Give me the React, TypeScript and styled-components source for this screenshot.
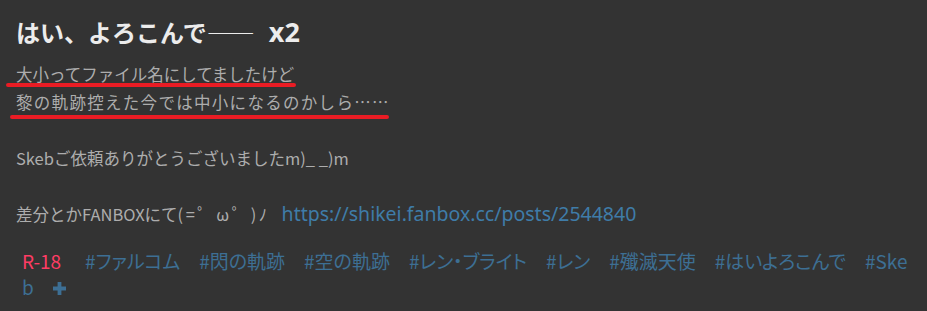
import styled, { createGlobalStyle } from "styled-components";

const GlobalStyle = createGlobalStyle`
  html, body {
    margin: 0;
    padding: 0;
    background: #333333;
  }
  body {
    font-family: "Noto Sans CJK JP", "Noto Sans", sans-serif;
  }
`;

export const Container = styled.div`
  width: 927px;
  height: 311px;
  box-sizing: border-box;
  padding: 14px 16px 0 16px;
  background-color: #333333;
  overflow: hidden;
`;

export const Title = styled.h1`
  margin: 0;
  font-size: 24px;
  line-height: 36px;
  font-weight: 700;
  font-feature-settings: "fwid";
  color: #ececec;
`;

export const TitleLatin = styled.span`
  font-family: "Noto Sans", sans-serif;
  font-size: 27px;
  font-feature-settings: normal;
  margin-left: 14px;
`;

export const Caption = styled.div`
  margin-top: 10px;
  font-size: 16.5px;
  line-height: 28px;
  color: #adadad;
  white-space: pre-wrap;
`;

export const Line = styled.div<{ $spread?: number }>`
  position: relative;
  min-height: 28px;
  letter-spacing: ${(p) => p.$spread ?? 0}px;
`;

export const Kaomoji = styled.span`
  letter-spacing: 2.5px;
`;

// red hand-drawn marks lying over the text
export const Mark = styled.div<{ $left: number; $width: number; $top: number }>`
  position: absolute;
  left: ${(p) => p.$left}px;
  top: ${(p) => p.$top}px;
  width: ${(p) => p.$width}px;
  height: 4px;
  border-radius: 2px;
  background-color: #ea1c24;
`;

export const Link = styled.a`
  margin-left: 12px;
  font-family: "Noto Sans", sans-serif;
  font-size: 19.5px;
  color: #3f7ca8;
  text-decoration: none;
`;

export const Tags = styled.div`
  margin-top: 20px;
  padding-left: 6px;
  font-size: 19px;
  line-height: 26px;
  font-feature-settings: "palt";
  word-break: break-all;
  color: #3d6f94;
`;

export const Tag = styled.span<{ $r18?: boolean }>`
  margin-right: ${(p) => (p.$r18 ? 24 : 19)}px;
  color: ${(p) => (p.$r18 ? "#ff3c64" : "#3d6f94")};
`;

export const PlusButton = styled.span`
  display: inline-block;
  margin-left: 18px;
  vertical-align: -1px;
`;

const tags = [
  "#ファルコム",
  "#閃の軌跡",
  "#空の軌跡",
  "#レン・ブライト",
  "#レン",
  "#殲滅天使",
  "#はいよろこんで",
];

function App() {
  return (
    <>
      <GlobalStyle />
      <Container>
        <Title>
          はい、よろこんで——<TitleLatin>x2</TitleLatin>
        </Title>
        <Caption>
          <Line>
            大小ってファイル名にしてましたけど
            <Mark $left={-10} $width={290} $top={23} />
          </Line>
          <Line $spread={1.3}>
            黎の軌跡控えた今では中小になるのかしら……
            <Mark $left={-6} $width={379} $top={27} />
          </Line>
          <Line />
          <Line>Skebご依頼ありがとうございましたm)_ _)m</Line>
          <Line />
          <Line>
            差分とかFANBOXにて<Kaomoji>(=゜ω゜)ﾉ</Kaomoji>
            <Link href="#">https://shikei.fanbox.cc/posts/2544840</Link>
          </Line>
        </Caption>
        <Tags>
          <Tag $r18>R-18</Tag>
          {tags.map((t) => (
            <Tag key={t}>{t}</Tag>
          ))}
          #Skeb
          <PlusButton>
            <svg width="15" height="15" viewBox="0 0 15 15">
              <path d="M7.5 1v13M1 7.5h13" stroke="#3d6f94" strokeWidth="3.8" />
            </svg>
          </PlusButton>
        </Tags>
      </Container>
    </>
  );
}

export default App;
